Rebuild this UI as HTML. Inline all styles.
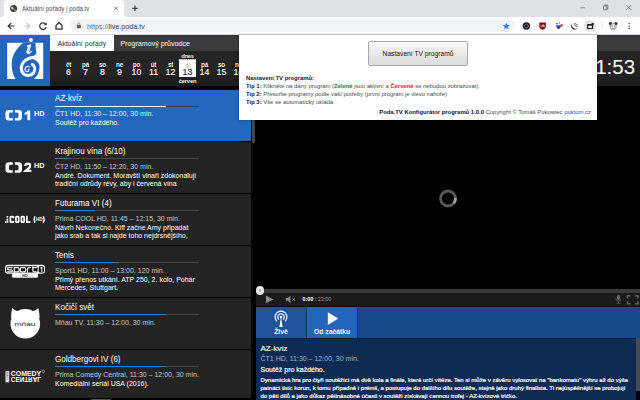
<!DOCTYPE html>
<html lang="cs">
<head>
<meta charset="utf-8">
<title>Aktuální pořady | poda.tv</title>
<style>
*{margin:0;padding:0;box-sizing:border-box}
html,body{width:640px;height:400px;overflow:hidden;background:#000}
body{font-family:"Liberation Sans",sans-serif;position:relative;color:#fff}
.abs{position:absolute}
.t{position:absolute;white-space:nowrap;line-height:1}
/* chrome */
#tabstrip{left:0;top:0;width:640px;height:17px;background:#dee1e6}
#tab{left:4px;top:0;width:120px;height:17px;background:#fff;border-radius:4px 4px 0 0}
#toolbar{left:0;top:17px;width:640px;height:18px;background:#fff;border-bottom:1px solid #d9dce0}
#pill{left:70px;top:19px;width:444.5px;height:13px;border-radius:7px;background:#f1f3f4}
/* page */
#logo{left:0;top:35px;width:50px;height:51px;background:#2265bd}
#tabsbar{left:50px;top:35px;width:590px;height:16px;background:linear-gradient(#333,#3b3b3b 25%,#3b3b3b)}
#tab1{left:50px;top:35px;width:64px;height:16px;background:#fff}
#tab2{left:114px;top:35px;width:81px;height:16px;background:transparent}
#datebar{left:50px;top:51px;width:590px;height:34.8px;background:linear-gradient(#242424 60%,#1a1a1a)}
.dn{position:absolute;top:61.9px;width:17px;text-align:center;font-size:6.3px;font-weight:bold;line-height:6px;color:#fff;text-shadow:0 0 1px #000,0 0 1px #000;letter-spacing:-.2px}
.dd{position:absolute;top:66.6px;width:17px;text-align:center;font-size:9.8px;line-height:10px;transform:scaleX(.9);-webkit-text-stroke:.2px #fff;color:#fff;text-shadow:0 0 1px #000,0 0 1px #000}
.row{position:absolute;left:0;width:251px;height:50.8px;background:#232323}
.row.act{background:#2468bd}
.row .ti{position:absolute;left:55px;top:3.9px;font-size:8.7px;transform:scaleX(.93);transform-origin:0 0;line-height:10px;white-space:nowrap;color:#fff}
.row .pg{position:absolute;left:55px;top:16.1px;width:143.8px;height:1px;background:#484848}
.row .pg i{position:absolute;left:0;top:0;height:1px;background:#2a7be0;display:block}
.row.act .pg{background:#1a3f77}
.row.act .pg i{background:#fff}
.row .su{position:absolute;left:55px;top:19.9px;font-size:7px;line-height:9px;white-space:nowrap;color:#c8c8c8}
.row .de{position:absolute;left:55px;top:29.6px;font-size:7px;line-height:8.5px;white-space:nowrap;color:#fff}
.row.act .su{color:#e6eefa}
/* popup */
#popup{left:239px;top:35px;width:358px;height:84.5px;background:#fff;box-shadow:0 0 2px rgba(0,0,0,.5);color:#222}
#btn{left:129px;top:6px;width:100px;height:24.5px;border:1px solid #a9a9a9;border-radius:2px;background:linear-gradient(#f8f8f8,#dcdcdc);font-size:6.7px;line-height:23.5px;text-align:center;color:#111}
.pl{position:absolute;left:7px;font-size:5.9px;line-height:8px;white-space:nowrap;color:#484848}
.pl b{color:#10103f}
/* player */
#ctl{left:256px;top:292.6px;width:384px;height:13.9px;background:#1b1b1b}
#track{left:256px;top:288.8px;width:384px;height:3.8px;background:#3a3a3a}
#knob{left:255.5px;top:286.3px;width:8.5px;height:8.5px;border-radius:50%;background:radial-gradient(#b0b0b0 12%,#f2f2f2 28%,#e6e6e6 60%,#d0d0d0)}
#strip{left:256px;top:306.5px;width:384px;height:31.5px;background:#174a8b}
#bz{left:256px;top:306.5px;width:50px;height:31.5px;background:#1d5499;border-right:1px solid #123768;box-sizing:content-box}
#bo{left:307px;top:306.5px;width:50.3px;height:31.5px;background:#2166bb;border-right:1px solid #123768;box-sizing:content-box}
#info{left:256px;top:338px;width:380px;height:62px;background:#0d2a52;border-top:1px solid #0a2040}
#sb{left:636.3px;top:338px;width:3.7px;height:53px;background:#4a4a4a}
</style>
</head>
<body>
<!-- ===== Chrome ===== -->
<div id="tabstrip" class="abs"></div>
<div id="tab" class="abs"></div>
<svg class="abs" style="left:0;top:0" width="640" height="35" viewBox="0 0 640 35">
  <!-- tab curves -->
  <path d="M1 17 Q4 17 4 14 L4 17Z M127 17 Q124 17 124 14 L124 17Z" fill="#fff"/>
  <!-- favicon globe -->
  <circle cx="13.6" cy="8.4" r="3.5" fill="#3c4043"/>
  <path d="M11.2 7.2 q1.2 -.8 2 .2 q.9 1 .2 1.8 q-1 .6 -1.7 -.3z M14.5 9.6 q1 -.3 1.4 .5 q-.5 1 -1.3 1z" fill="#fff" opacity=".85"/>
  <!-- close -->
  <path d="M114.3 6.6 L117.7 10 M117.7 6.6 L114.3 10" stroke="#5f6368" stroke-width=".8"/>
  <!-- plus -->
  <path d="M132.3 8.3 H137.7 M135 5.6 V11" stroke="#202124" stroke-width="1"/>
  <!-- window controls -->
  <path d="M580.2 7.8 H585" stroke="#5a5d61" stroke-width=".7"/>
  <path d="M603.6 5.9 h3.4 v3.9 h-3.4z M604.6 5.9 v-.9 h3.3 v3.8 h-.9" stroke="#5a5d61" stroke-width=".7" fill="none"/>
  <path d="M626.4 5.1 L631.2 9.9 M631.2 5.1 L626.4 9.9" stroke="#5a5d61" stroke-width=".7"/>
</svg>
<div class="t" style="left:22px;top:5.500px;font-size:6.600px;transform:scaleX(.925);transform-origin:0 0;color:#4a4e54">Aktuální pořady | poda.tv</div>
<div id="toolbar" class="abs"></div>
<div id="pill" class="abs"></div>
<svg class="abs" style="left:0;top:17px" width="640" height="18" viewBox="0 17 640 18">
  <!-- back -->
  <path d="M14.300 26 H8.300 M11.300 22.900 L8.200 26 L11.300 29.100" stroke="#2e3134" stroke-width="1.200" fill="none"/>
  <!-- forward -->
  <path d="M23.700 26 H29.700 M26.700 22.900 L29.800 26 L26.700 29.100" stroke="#c0c3c7" stroke-width="1.200" fill="none"/>
  <!-- reload -->
  <path d="M45.700 24.300 A3.300 3.300 0 1 0 46.100 27.300" stroke="#2e3134" stroke-width="1.200" fill="none"/>
  <path d="M46.700 22.300 V25.100 H43.900z" fill="#2e3134"/>
  <!-- home -->
  <path d="M56 25.600 L59 22.500 L62 25.600 V29.200 H56z" stroke="#2e3134" stroke-width="1.250" fill="none" stroke-linejoin="miter"/>
  <!-- lock -->
  <rect x="76.9" y="25" width="3.9" height="3.2" rx=".4" fill="#5f6368"/>
  <path d="M77.7 25 v-.9 a1.15 1.15 0 0 1 2.3 0 v.9" stroke="#5f6368" stroke-width=".6" fill="none"/>
  <!-- star -->
  <path d="M506.3 22.7 l1.05 2.2 2.4 .3 -1.75 1.65 .45 2.35 -2.15 -1.15 -2.15 1.15 .45 -2.35 -1.75 -1.65 2.4 -.3z" fill="#2d7df6"/>
  <!-- ext 1: dark circle w/ colour ring -->
  <circle cx="526.400" cy="26" r="3.700" fill="#17171b"/>
  <path d="M526.40 24.10 A1.9 1.9 0 0 1 528.21 25.41" stroke="#e8453c" stroke-width="1" fill="none"/>
  <path d="M528.21 25.41 A1.9 1.9 0 0 1 527.52 27.54" stroke="#f2c230" stroke-width="1" fill="none"/>
  <path d="M527.52 27.54 A1.9 1.9 0 0 1 525.28 27.54" stroke="#35b36b" stroke-width="1" fill="none"/>
  <path d="M525.28 27.54 A1.9 1.9 0 0 1 524.59 25.41" stroke="#3a8ef0" stroke-width="1" fill="none"/>
  <path d="M524.59 25.41 A1.9 1.9 0 0 1 526.40 24.10" stroke="#a04ad8" stroke-width="1" fill="none"/>
  <!-- ext 2: ublock shield -->
  <path d="M539.3 22.6 h6.6 v3.6 q0 2.6 -3.3 3.7 q-3.3 -1.1 -3.3 -3.7z" fill="#7d0f14"/>
  <path d="M540.9 24.6 v1.5 q0 .8 .8 .8 t.8 -.8 v-1.5 M543.4 24.2 v2.7 M543.4 25.6 q1.4 -.5 1.4 .6 q0 1 -1.4 .6" stroke="#fff" stroke-width=".5" fill="none"/>
  <!-- ext 3 -->
  <path d="M556.3 25.2 h4.6 q0 3.8 -2.3 3.8 t-2.3 -3.8z" fill="#2543c5"/>
  <circle cx="557" cy="23.6" r=".8" fill="#2543c5"/><circle cx="559.4" cy="23" r=".7" fill="#5b7bf0"/>
  <circle cx="561.6" cy="25.4" r="1.3" fill="#e8384f"/>
  <!-- ext 4 -->
  <path d="M572.800 22.800 a3.700 3.700 0 1 0 5.400 4.700 a3.100 3.100 0 0 1 -5.400 -4.700z" fill="#1c1c1c"/>
  <path d="M574.500 23.300 a2.400 2.400 0 0 0 3 3 M575.800 22.900 a1.400 1.400 0 0 0 1.900 1.900" stroke="#1c1c1c" stroke-width=".650" fill="none"/>
  <!-- ext 5 active -->
  <circle cx="589.900" cy="26" r="6" fill="#e2e3e6"/>
  <rect x="587" y="23.900" width="6.200" height="5.100" rx=".700" fill="#1e1e22"/>
  <rect x="588.200" y="25.700" width="3.700" height="2.300" fill="#f0f0f0"/>
  <rect x="591.600" y="23.100" width="2.100" height="1.800" rx=".300" fill="#1e1e22"/>
  <!-- separator -->
  <path d="M601.8 22.3 V29.7" stroke="#cfd2d6" stroke-width=".6"/>
  <!-- avatar -->
  <circle cx="613.2" cy="26" r="4.4" fill="#e9e9ea"/>
  <circle cx="610.4" cy="23.6" r="1.5" fill="#2b2b2b"/><circle cx="616" cy="23.600" r="1.5" fill="#2b2b2b"/>
  <circle cx="613.2" cy="26.6" r="2.9" fill="#f6f6f6" stroke="#444" stroke-width=".5"/>
  <circle cx="612.1" cy="26" r=".55" fill="#222"/><circle cx="614.3" cy="26" r=".55" fill="#222"/>
  <path d="M612 28 q1.200 .9 2.400 0" stroke="#222" stroke-width=".5" fill="none"/>
  <!-- menu -->
  <circle cx="629.200" cy="23.5" r=".75" fill="#3c4043"/><circle cx="629.200" cy="26" r=".75" fill="#3c4043"/><circle cx="629.200" cy="28.5" r=".75" fill="#3c4043"/>
</svg>
<div class="t" style="left:87px;top:22.600px;font-size:7.200px;color:#3c4043"><span style="color:#6b6f74">https://</span>live.poda.tv</div>

<!-- ===== Page header ===== -->
<div id="logo" class="abs"></div>
<svg class="abs" style="left:0;top:35px" width="50" height="51" viewBox="0 35 50 51">
  <rect x="7.2" y="42.8" width="36" height="36.200" fill="#fff"/>
  <!-- the 6 -->
  <path d="M23.3 42.8 C16 49 11.500 56 11.700 64 C11.5 70 13 75 15.5 79 L33.8 79 C37.5 76 39.8 71 39.500 66 C39.200 62.500 36 60 31 58.600 L34.300 55.800 L36.600 53.300 C35.800 50 35.600 46.500 35.500 42.800 Z" fill="#2265bd"/>
  <path d="M38 57 C33 57 27 58.300 23.600 62 C20.600 65.500 20.400 70.500 23.200 73.500 C26 76.400 31 76 33.400 73 C35.600 70 35 66.300 32.300 64.300" fill="none" stroke="#fff" stroke-width="3" stroke-linecap="round"/>
  <path d="M29.600 66.800 C27.600 65.700 25.200 66.800 25 69 C24.900 71 26.600 72 28 71.500 C29.200 71 29.300 69.500 28.200 69.200" fill="none" stroke="#fff" stroke-width="1.100" stroke-linecap="round"/>
  <!-- the i -->
  <circle cx="30.900" cy="39.900" r="2" fill="#fff"/>
  <path d="M27.300 45.500 L31 44.400 L28.900 51.600 Q28.700 52.600 29.700 52.100 L31.300 51 L31.700 51.700 Q29.200 54.300 27.500 53.700 Q26.300 53.200 26.800 51.300 L28.200 46.700 L27 46.500Z" fill="#fff" stroke="#fff" stroke-width=".500" stroke-linejoin="round"/>
</svg>
<div id="tabsbar" class="abs"></div>
<div id="tab1" class="abs"></div>
<div id="tab2" class="abs"></div>
<div class="t" style="left:57.500px;top:40px;font-size:7px;color:#333">Aktuální pořady</div>
<div class="t" style="left:120.500px;top:40.600px;font-size:7.100px;color:#fff">Programový průvodce</div>
<div id="datebar" class="abs"></div>
<!-- dates -->
<div class="dn" style="left:60px">čt</div><div class="dd" style="left:60px">6</div>
<div class="dn" style="left:77px">pá</div><div class="dd" style="left:77px">7</div>
<div class="dn" style="left:94px">so</div><div class="dd" style="left:94px">8</div>
<div class="dn" style="left:111px">ne</div><div class="dd" style="left:111px">9</div>
<div class="dn" style="left:128px">po</div><div class="dd" style="left:128px">10</div>
<div class="dn" style="left:145px">út</div><div class="dd" style="left:145px">11</div>
<div class="dn" style="left:162px">st</div><div class="dd" style="left:162px">12</div>
<div class="abs" style="left:178.800px;top:58.700px;width:17.200px;height:18px;background:#fff"></div>
<svg class="abs" style="left:178.800px;top:58px" width="18" height="3" viewBox="0 0 18 3"><path d="M2 0v1.700M4.200 0v1.700M6.400 0v1.700M8.600 0v1.700M10.800 0v1.700M13 0v1.700M15.200 0v1.700" stroke="#222" stroke-width=".9"/><path d="M0 .700H17.200" stroke="#fff" stroke-width=".8" opacity=".0"/></svg>
<div class="dn" style="left:170px;width:35px;top:53px;font-size:5.800px">dnes</div>
<div class="dn" style="left:178.800px;top:62.500px;color:#aab4cf;font-weight:normal;text-shadow:none;font-size:6.300px">čt</div><div class="dd" style="left:178.800px;color:#1d2b6d;text-shadow:none;-webkit-text-stroke:.2px #1d2b6d">13</div>
<div class="dn" style="left:170px;width:35px;top:77.700px;font-size:5.800px">červen</div>
<div class="dn" style="left:196px">pá</div><div class="dd" style="left:196px">14</div>
<div class="dn" style="left:213px">so</div><div class="dd" style="left:213px">15</div>
<div class="dn" style="left:230px">ne</div><div class="dd" style="left:230px">16</div>
<!-- clock -->
<div class="t" style="right:4.900px;top:57.200px;font-size:20.500px;color:#fff">11:53</div>

<!-- ===== Programme list ===== -->
<div class="row act" style="top:89.500px;height:51.300px">
  <div class="ti">AZ-kvíz</div><div class="pg"><i style="width:111px"></i></div>
  <div class="su">ČT1 HD, 11:30 – 12:00, 30 min.</div>
  <div class="de">Soutěž pro každého.</div>
</div>
<div class="row" style="top:142px">
  <div class="ti">Krajinou vína (6/10)</div><div class="pg"><i style="width:14px"></i></div>
  <div class="su">ČT2 HD, 11:50 – 12:20, 30 min.</div>
  <div class="de">André. Dokument. Moravští vinaři zdokonalují<br>tradiční odrůdy révy, aby i červená vína</div>
</div>
<div class="row" style="top:194px">
  <div class="ti">Futurama VI (4)</div><div class="pg"><i style="width:40px"></i></div>
  <div class="su">Prima COOL HD, 11:45 – 12:15, 30 min.</div>
  <div class="de">Návrh Nekonečno. Kiff začne Amy připadat<br>jako srab a tak si najde toho nejdrsnějšího,</div>
</div>
<div class="row" style="top:246px">
  <div class="ti">Tenis</div><div class="pg"><i style="width:64px"></i></div>
  <div class="su">Sport1 HD, 11:00 – 13:00, 120 min.</div>
  <div class="de">Přímý přenos utkání. ATP 250, 2. kolo, Pohár<br>Mercedes, Stuttgart.</div>
</div>
<div class="row" style="top:298px">
  <div class="ti">Kočičí svět</div><div class="pg"><i style="width:111px"></i></div>
  <div class="su">Mňau TV, 11:30 – 12:00, 30 min.</div>
</div>
<div class="row" style="top:350px;height:50px">
  <div class="ti">Goldbergovi IV (6)</div><div class="pg"><i style="width:111px"></i></div>
  <div class="su">Prima Comedy Central, 11:30 – 12:00, 30 min.</div>
  <div class="de">Komediální seriál USA (2016).</div>
</div>
<div class="abs" style="left:0;top:398.200px;width:256px;height:1.800px;background:#000"></div>
<div class="abs" style="left:91px;top:399px;width:19.500px;height:1px;background:#555;border-radius:1px 1px 0 0"></div>
<!-- list scrollbar thumb -->
<div class="abs" style="left:252px;top:86px;width:2.500px;height:56.500px;background:#444"></div>

<!-- channel logos -->
<svg class="abs" style="left:0;top:86px" width="54" height="314" viewBox="0 86 54 314">
  <!-- CT1 -->
  <g fill="#fff">
    <path d="M8.700 110 h4.100 v2.400 h-2.300 q-1.500 0 -1.500 1.500 v2.700 q0 1.500 1.500 1.500 h2.300 v2.400 h-4.100 q-3.200 0 -3.200 -3.200 v-4.100 q0 -3.200 3.200 -3.200z"/>
    <path d="M14.900 110 h3.900 q3.200 0 3.200 3.200 v4.100 q0 3.200 -3.200 3.200 h-3.900 v-2.400 h2.100 q1.500 0 1.500 -1.500 v-2.700 q0 -1.500 -1.500 -1.500 h-2.100z"/>
  </g>
  <path d="M27.600 110.400 h2.600 v9.800 h-2.800 v-6.400 q-1.200 .900 -2.800 1.300 v-2.200 q2.200 -.800 3 -2.500z" fill="#fff"/>
  <text x="33.900" y="116" font-family="Liberation Sans" font-weight="bold" font-size="7.600" fill="#fff" textLength="10.600" lengthAdjust="spacingAndGlyphs">HD</text>
  <!-- CT2 -->
  <g fill="#fff" transform="translate(0,52.250)">
    <path d="M8.700 110 h4.100 v2.400 h-2.300 q-1.500 0 -1.500 1.500 v2.700 q0 1.500 1.500 1.500 h2.300 v2.400 h-4.100 q-3.200 0 -3.200 -3.200 v-4.100 q0 -3.200 3.200 -3.200z"/>
    <path d="M14.900 110 h3.900 q3.200 0 3.200 3.200 v4.100 q0 3.200 -3.200 3.200 h-3.900 v-2.400 h2.100 q1.500 0 1.500 -1.500 v-2.700 q0 -1.500 -1.500 -1.500 h-2.100z"/>
  </g>
  <path d="M25.300 165.900 Q25.400 163.700 27.800 163.700 Q30.200 163.700 30.200 165.700 Q30.200 167.100 28.300 168.500 L25.600 170.900 H31.400" fill="none" stroke="#fff" stroke-width="2.200"/>
  <text x="33.900" y="168.250" font-family="Liberation Sans" font-weight="bold" font-size="7.600" fill="#fff" textLength="10.600" lengthAdjust="spacingAndGlyphs">HD</text>
  <!-- COOL -->
  <g fill="none" stroke="#fff" stroke-width="1.700">
    <path d="M7.400 216 V222.200 M5 222.200 H8.300" stroke-dasharray="1.100 .35"/>
    <path d="M13.500 218.200 V217.400 Q13.500 216.700 12.800 216.700 H11.100 Q10.400 216.700 10.400 217.400 V221.500 Q10.400 222.200 11.100 222.200 H12.800 Q13.500 222.200 13.500 221.500 V220.700"/>
    <rect x="15.900" y="216.700" width="2.800" height="5.500" rx=".700"/>
    <rect x="21.400" y="216.700" width="2.800" height="5.500" rx=".700"/>
    <path d="M26.900 215.850 V222.200 H30.400"/>
  </g>
  <g fill="none" stroke="#fff" stroke-width="1.300">
    <path d="M35 216.300 Q33.300 219.500 35 222.800 M43.300 216.300 Q45 219.500 43.300 222.800"/>
  </g>
  <text x="36" y="221.400" font-family="Liberation Sans" font-weight="bold" font-size="4.800" fill="#fff" textLength="6.500" lengthAdjust="spacingAndGlyphs">HD</text>
  <!-- Sport1 -->
  <rect x="5" y="264.700" width="40" height="9" rx="3" fill="#f4f4f4"/>
  <rect x="12" y="272" width="26" height="5.700" rx="1.500" fill="#f4f4f4"/>
  <rect x="6.100" y="266.200" width="31.500" height="6.400" rx="2" fill="#111"/>
  <rect x="38.700" y="266.200" width="5.300" height="6.400" rx="1.500" fill="#111"/>
  <g fill="none" stroke="#f4f4f4" stroke-width="1.250">
    <path d="M12.600 267.700 H8.700 Q7.500 267.700 7.500 268.750 Q7.500 269.800 8.700 269.800 H11.400 Q12.600 269.800 12.600 270.850 Q12.600 271.900 11.400 271.900 H7.300"/>
    <path d="M14.300 273 V267.700 H17.700 Q19.100 267.700 19.100 269.100 V270.500 Q19.100 271.900 17.700 271.900 H14.300"/>
    <path d="M21.700 267.700 H24.300 Q25.700 267.700 25.700 269.100 V270.500 Q25.700 271.900 24.300 271.900 H21.700 Q20.300 271.900 20.300 270.500 V269.100 Q20.300 267.700 21.700 267.700Z"/>
    <path d="M27.500 272.400 V269.100 Q27.500 267.700 28.900 267.700 H31.100"/>
    <path d="M32.900 266.400 V270.500 Q32.900 271.900 34.300 271.900 H36.700 M31.900 267.700 H36.700"/>
    <path d="M40.300 268.300 L41.800 267.500 V272" stroke-width="1.100"/>
  </g>
  <text x="22.300" y="276.700" font-family="Liberation Sans" font-weight="bold" font-size="3.600" fill="#333">HD</text>
  <!-- Mnau -->
  <circle cx="25.300" cy="323.700" r="14.800" fill="#fff"/>
  <path d="M10.900 318.500 Q11.300 312 12.200 308 Q14.500 310.500 18 311.300 Z M39.700 318.500 Q39.300 312 38.400 308 Q36.100 310.500 32.600 311.300 Z" fill="#fff"/>
  <text x="14.500" y="326" font-family="Liberation Sans" font-size="5.500" fill="#222" textLength="21" lengthAdjust="spacingAndGlyphs">mňau</text>
  <!-- Comedy central -->
  <rect x="5.500" y="371.100" width="3.700" height="11.200" fill="#ececec"/>
  <path d="M6.300 372.500 h2.100 M6.300 374 h2.100 M6.300 375.500 h2.100 M6.300 377 h2.100 M6.300 379.800 l2.100 -1.200" stroke="#333" stroke-width=".5"/>
  <text x="10.800" y="376.200" font-family="Liberation Sans" font-weight="bold" font-size="6.900" fill="#fff" textLength="30.400" lengthAdjust="spacingAndGlyphs">COMEDY</text>
  <g transform="translate(0,753.500) scale(1,-1)"><text x="10.800" y="376.200" font-family="Liberation Sans" font-weight="bold" font-size="6.900" fill="#fff" textLength="30.400" lengthAdjust="spacingAndGlyphs">CENTRAL</text></g>
  <circle cx="43.300" cy="371.300" r="1.300" fill="none" stroke="#ddd" stroke-width=".45"/>
</svg>

<!-- ===== Player ===== -->
<svg class="abs" style="left:430px;top:180px" width="36" height="37" viewBox="0 0 36 37">
  <circle cx="18" cy="18.500" r="7.500" fill="none" stroke="#585858" stroke-width="2.800"/>
  <path d="M25.47 17.85 A7.500 7.500 0 0 1 23.75 23.32" fill="none" stroke="#a0a0a0" stroke-width="2.800"/>
</svg>
<div id="ctl" class="abs"></div>
<div id="track" class="abs"></div>
<div id="knob" class="abs"></div>
<svg class="abs" style="left:256px;top:292px" width="384" height="15" viewBox="256 292 384 15">
  <path d="M266 295.600 L273.400 299.400 L266 303.200Z" fill="#8a8a8a"/>
  <path d="M285.800 298 h2 l2.600 -2.300 v7.400 l-2.600 -2.300 h-2z" fill="#8a8a8a"/>
  <path d="M292.300 298 l2.600 2.800 M294.900 298 l-2.600 2.800" stroke="#8a8a8a" stroke-width=".7"/>
  <!-- mic -->
  <rect x="617" y="295" width="2.800" height="5" rx="1.400" fill="#6a6a6a"/>
  <path d="M615.700 298.500 a2.700 2.700 0 0 0 5.400 0 M618.400 301.200 v2 M616.800 303.400 h3.200" stroke="#6a6a6a" stroke-width=".7" fill="none"/>
  <!-- fullscreen -->
  <path d="M627.500 298.300 v-2.500 h2.800 M635.200 295.800 h2.800 v2.500 M638 301.200 v2.500 h-2.800 M630.300 303.700 h-2.800 v-2.500" stroke="#666" stroke-width="1.400" fill="none"/>
</svg>
<div class="t" style="left:302.500px;top:296.900px;font-size:5.400px;color:#999"><b style="color:#fff">0:00</b> / 23:00</div>

<div id="strip" class="abs"></div>
<div id="bz" class="abs"></div>
<div id="bo" class="abs"></div>
<svg class="abs" style="left:256px;top:306.500px" width="102" height="32" viewBox="256 306.500 102 32">
  <!-- antenna -->
  <g stroke="#fff" fill="none">
    <path d="M276.83 320.77 A5.9 5.9 0 1 1 285.17 320.77" stroke-width="1.200"/>
    <path d="M278.88 319.13 A3.3 3.3 0 1 1 283.12 319.13" stroke-width="1.100"/>
  </g>
  <circle cx="281" cy="316.600" r="1.300" fill="#fff"/>
  <path d="M281 316.600 L279.400 326.600 h3.200z" fill="#fff"/>
  <!-- play -->
  <path d="M327.800 311.800 L338.200 318.100 L327.800 324.400Z" fill="#fff"/>
</svg>
<div class="t" style="left:256px;width:50px;text-align:center;top:328.700px;font-size:6.800px;font-weight:bold;color:#fff">Živě</div>
<div class="t" style="left:307px;width:50.300px;text-align:center;top:328.700px;font-size:6.800px;font-weight:bold;color:#fff">Od začátku</div>

<div id="info" class="abs"></div>
<div id="sb" class="abs"></div>
<div class="t" style="left:260.500px;top:344.700px;font-size:8px;color:#fff;-webkit-text-stroke:.15px #fff">AZ-kvíz</div>
<div class="t" style="left:260.500px;top:354.500px;font-size:7px;color:#9fb0cb">ČT1 HD, 11:30 – 12:00, 30 min.</div>
<div class="t" style="left:260.500px;top:366.200px;font-size:7px;color:#fff;-webkit-text-stroke:.2px #fff">Soutěž pro každého.</div>
<div class="t" style="left:260.500px;top:377.200px;font-size:6.020px;line-height:7.850px;color:#fff;-webkit-text-stroke:.2px #fff">Dynamická hra pro čtyři soutěžící má dvě kola a finále, které určí vítěze. Ten si může v závěru vylosovat na "bankomatu" výhru až do výše<br>patnáct tisíc korun, k tomu případně i prémii, a postupuje do dalšího dílu soutěže, stejně jako druhý finalista. Ti nejúspěšnější se probojují<br>do pěti dílů a jako důkaz pětinásobné účasti v soutěži získávají cennou trofej - AZ-kvízové tričko.</div>

<!-- ===== Extension popup ===== -->
<div id="popup" class="abs">
  <div id="btn" class="abs">Nastavení TV programů</div>
  <div class="pl" style="top:38.500px"><b>Nastavení TV programů:</b></div>
  <div class="pl" style="top:46.700px"><b>Tip 1:</b> Klikněte na daný program (<b style="color:#1b7a2b">Zelené</b> jsou aktivní a <b style="color:#e82020">Červené</b> se nebudou zobrazovat)</div>
  <div class="pl" style="top:54.900px"><b>Tip 2:</b> Přesuňte programy podle vaší potřeby (první program je vlevo nahoře)</div>
  <div class="pl" style="top:63.200px"><b>Tip 3:</b> Vše se automaticky ukládá</div>
  <div class="pl" style="top:73.200px;left:auto;right:6px"><b>Poda.TV Konfigurátor programů 1.0.0</b> Copyright © Tomáš Pukowiec <span style="color:#2a4bd8">puktom.cz</span></div>
</div>
</body>
</html>
